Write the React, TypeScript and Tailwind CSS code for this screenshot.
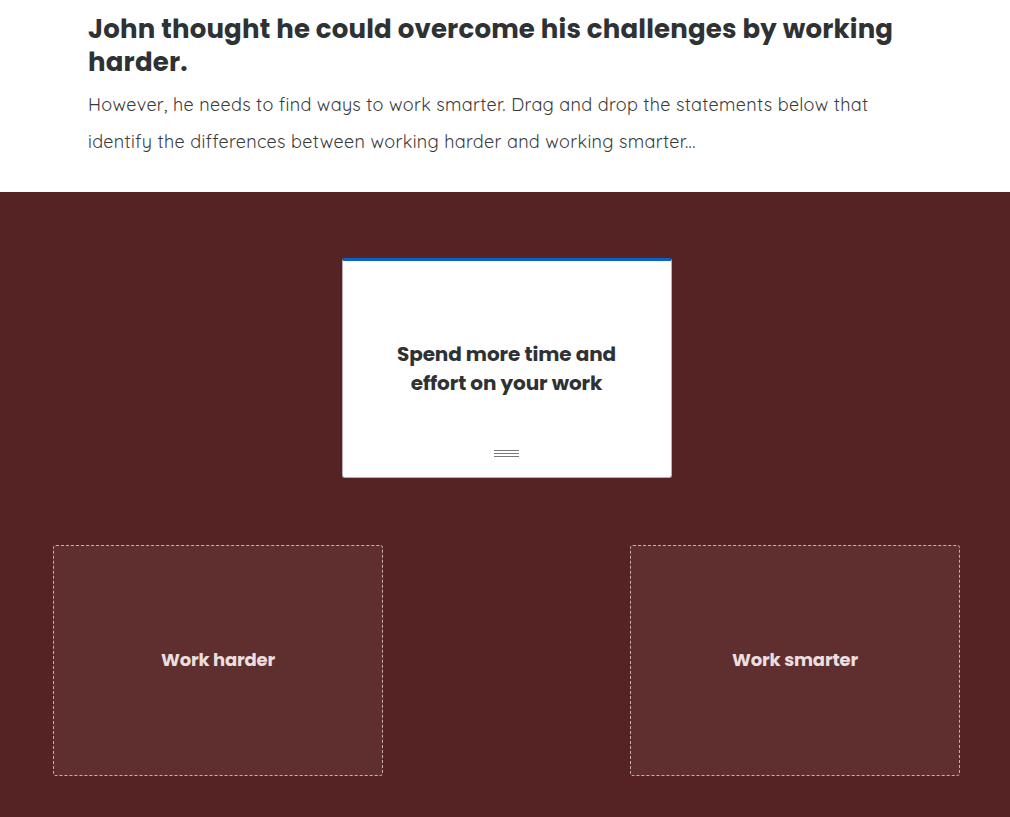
import React from "react";

const heading = "font-['Poppins','Open_Sans',sans-serif]";

function DropZone({ label }: { label: string }) {
  return (
    <div className="w-[330px] h-[231px] rounded-[3px] border border-dashed border-[#c9aeae] bg-[#5f2e2f] flex items-center justify-center">
      <span className={`${heading} text-[18px] font-bold text-[#eadede] tracking-[-0.2px] -mt-[2px]`}>{label}</span>
    </div>
  );
}

export default function App() {
  return (
    <div className="w-[1010px] min-h-[817px] bg-white flex flex-col">
      <section className="h-[192px] pl-[88px] pt-[13px]">
        <h1 className={`${heading} w-[850px] text-[26px] leading-[33px] font-bold text-[#2f3234] tracking-[0.2px]`}>
          John thought he could overcome his challenges by working harder.
        </h1>
        <p className="w-[834px] mt-[7px] font-['Quicksand','Open_Sans',sans-serif] font-normal text-[18px] leading-[37px] text-[#3a3a3a] tracking-[0.3px]">
          However, he needs to find ways to work smarter. Drag and drop the statements below that identify the differences between working harder and working smarter...
        </p>
      </section>
      <section className="flex-1 bg-[#562324] pl-[53px] pr-[50px] pt-[66px] pb-[42px] flex flex-col">
        <div className="self-center w-[330px] h-[220px] bg-white rounded-[3px] border border-[#b8b2b2] border-t-[3px] border-t-[#0b63c7] flex flex-col items-center">
          <div className="flex-1 flex items-center justify-center pt-[26px]">
            <p className={`${heading} text-center text-[20px] leading-[29px] font-bold text-[#2f3234] tracking-[-0.1px]`}>
              Spend more time and
              <br />
              effort on your work
            </p>
          </div>
          <div className="pb-[20px] flex flex-col gap-[2px]">
            <span className="block w-[25px] h-px bg-[#777]" />
            <span className="block w-[25px] h-px bg-[#777]" />
            <span className="block w-[25px] h-px bg-[#777]" />
          </div>
        </div>
        <div className="mt-[67px] flex justify-between">
          <DropZone label="Work harder" />
          <DropZone label="Work smarter" />
        </div>
      </section>
    </div>
  );
}
